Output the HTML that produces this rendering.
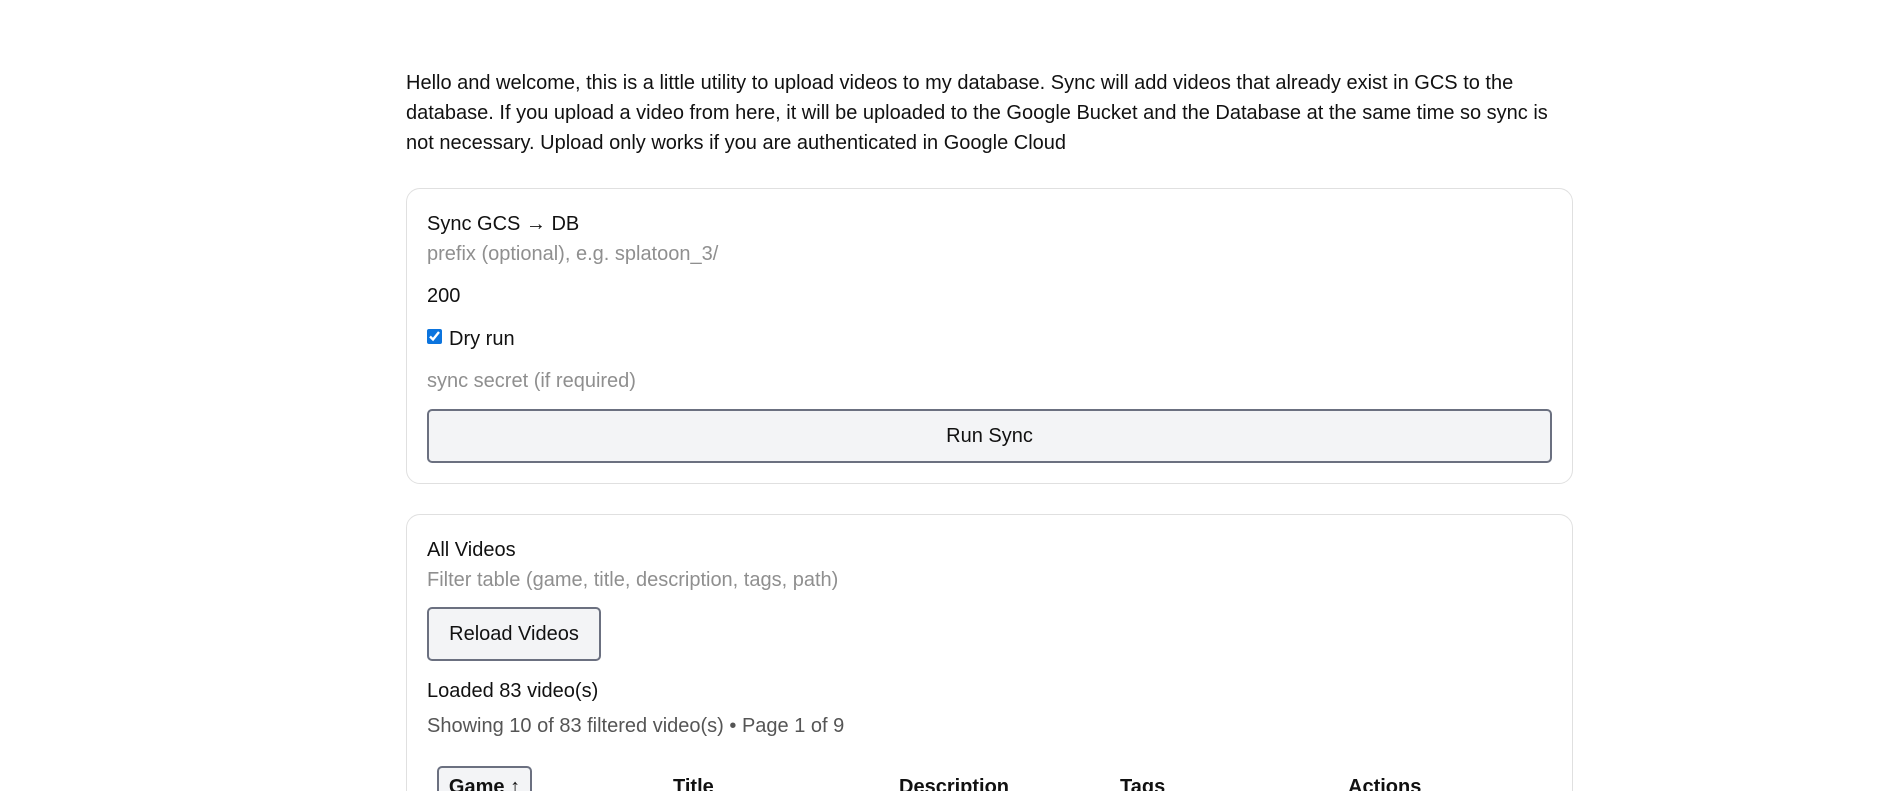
<!DOCTYPE html>
<html lang="en"><head><meta charset="utf-8"><title>Video Utility</title>
<style>
html,body{margin:0;padding:0;background:#fff;width:1897px;height:791px;overflow:hidden}
body{position:relative;font-family:"Liberation Sans",sans-serif;font-size:20px;color:#111}
.t{position:absolute;left:427px;line-height:30px;height:30px;white-space:nowrap}
.p{color:#8f8f8f}
.card{position:absolute;left:406px;width:1165px;border:1px solid #e0e0e0;border-radius:14px}
.btn{position:absolute;box-sizing:border-box;background:#f3f4f6;border:2px solid #6b7080;border-radius:5px;height:54px;line-height:50px;text-align:center;color:#111}
.th{position:absolute;top:772px;line-height:30px;font-weight:700;white-space:nowrap}
</style></head><body>
<div class="t" style="left:406px;top:68px">Hello and welcome, this is a little utility to upload videos to my database. Sync will add videos that already exist in GCS to the</div>
<div class="t" style="left:406px;top:98px">database. If you upload a video from here, it will be uploaded to the Google Bucket and the Database at the same time so sync is</div>
<div class="t" style="left:406px;top:128px">not necessary. Upload only works if you are authenticated in Google Cloud</div>

<div class="card" style="top:188px;height:294px"></div>
<div class="t" style="top:209px">Sync GCS → DB</div>
<div class="t p" style="top:239px">prefix (optional), e.g. splatoon_3/</div>
<div class="t" style="top:281px">200</div>
<input type="checkbox" checked style="position:absolute;left:427px;top:329px;width:15px;height:15px;margin:0;accent-color:#0b74de">
<div class="t" style="left:449px;top:324px">Dry run</div>
<div class="t p" style="top:366px">sync secret (if required)</div>
<div class="btn" style="left:427px;top:409px;width:1125px">Run Sync</div>

<div class="card" style="top:514px;height:400px"></div>
<div class="t" style="top:535px">All Videos</div>
<div class="t p" style="top:565px">Filter table (game, title, description, tags, path)</div>
<div class="btn" style="left:427px;top:607px;width:174px">Reload Videos</div>
<div class="t" style="top:676px">Loaded 83 video(s)</div>
<div class="t" style="top:711px;color:#555">Showing 10 of 83 filtered video(s) • Page 1 of 9</div>

<div class="btn" style="left:437px;top:766px;width:95px;font-weight:700;line-height:38px;white-space:nowrap">Game ↑</div>
<div class="th" style="left:673px">Title</div>
<div class="th" style="left:899px">Description</div>
<div class="th" style="left:1120px">Tags</div>
<div class="th" style="left:1348px">Actions</div>
</body></html>
